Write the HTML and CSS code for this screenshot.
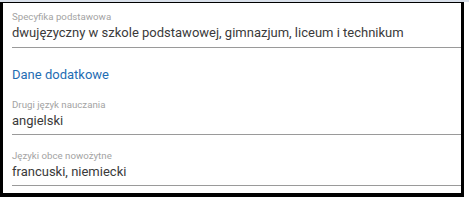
FILE: index.html
```html
<!DOCTYPE html>
<html lang="pl">
<head>
	<meta charset="UTF-8">
	<title>Dane szkoły</title>
	<link rel="stylesheet" href="styles.css">
</head>
<body>
	<div class="topbar"></div>
	<div class="card">
		<div class="field first">
			<div class="label">Specyfika podstawowa</div>
			<div class="value">dwujęzyczny w szkole podstawowej, gimnazjum, liceum i technikum</div>
		</div>
		<h3 class="section">Dane dodatkowe</h3>
		<div class="field">
			<div class="label">Drugi język nauczania</div>
			<div class="value">angielski</div>
		</div>
		<div class="field">
			<div class="label">Języki obce nowożytne</div>
			<div class="value">francuski, niemiecki</div>
		</div>
	</div>
</body>
</html>
```

FILE: styles.css
```css
*{
    margin: 0;
    padding: 0;
    box-sizing: border-box;
}
body{
    background: #fff;
    font-family: Roboto, "Liberation Sans", sans-serif;
    width: 469px;
    height: 203px;
    overflow: hidden;
}
.topbar{
    height: 2px;
    background: #d9e0ea;
}
.card{
    width: 464px;
    border-top: 1px solid #000;
    border-left: 3px solid #000;
    border-right: 3px solid #000;
    border-bottom: 4px solid #000;
    padding: 0 0 7px 9px;
    background: #fff;
}
.field{
    padding: 8px 0 5px;
    border-bottom: 1px solid #9a9a9a;
    margin-top: 7px;
}
.field.first{
    margin-top: 0;
    padding-bottom: 6px;
}
.label{
    font-size: 9.7px;
    line-height: 12px;
    color: #a3a3a3;
}
.value{
    margin-top: 2px;
    font-size: 13px;
    line-height: 16px;
    color: #3a3a3a;
}
.section{
    margin-top: 19px;
    font-size: 13px;
    line-height: 16px;
    font-weight: normal;
    color: #1f6db3;
}
.section + .field{
    margin-top: 8px;
}
```
